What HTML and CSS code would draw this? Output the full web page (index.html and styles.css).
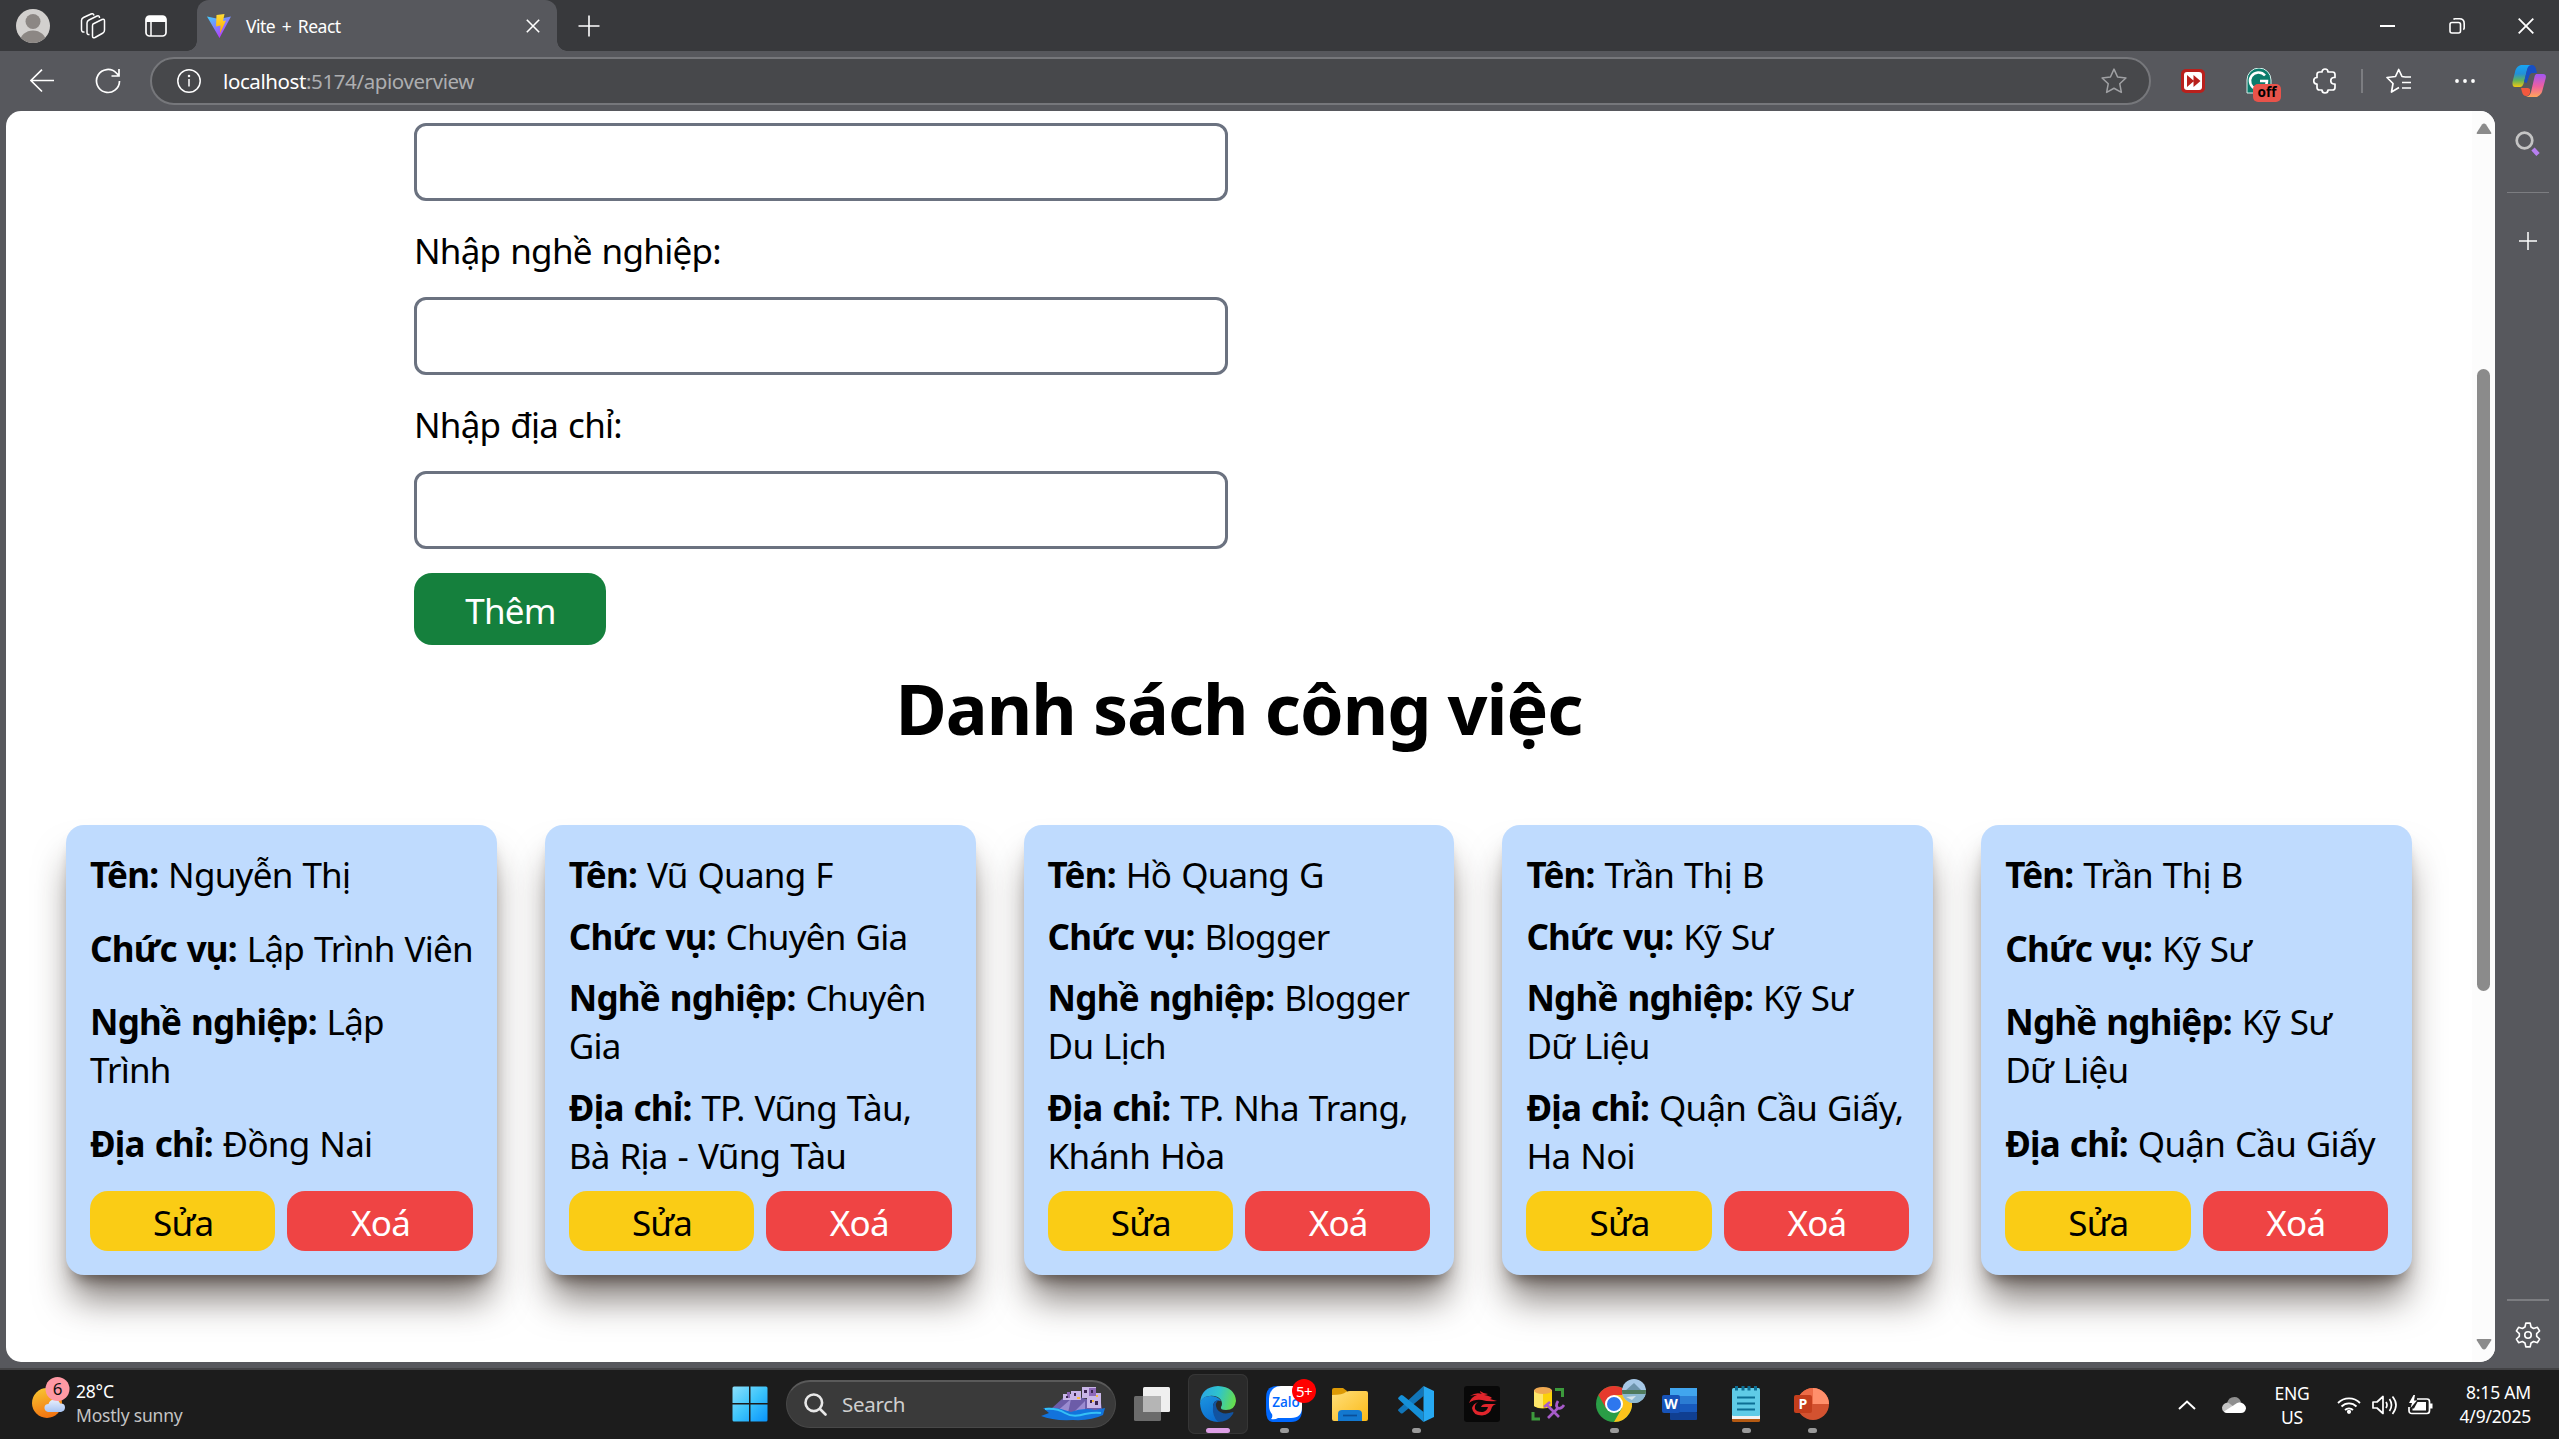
FILE: index.html
```html
<!DOCTYPE html>
<html lang="vi">
<head>
<meta charset="utf-8">
<title>Vite + React</title>
<link rel="stylesheet" href="styles.css">
</head>
<body>
<div class="screen">
  <header class="tabbar">
    <div class="tabbar-tools">
      <svg class="avatar" width="34" height="34" viewBox="0 0 34 34"><defs><clipPath id="av"><circle cx="17" cy="17" r="17"/></clipPath></defs><g clip-path="url(#av)"><rect width="34" height="34" fill="#d2d0ce"/><circle cx="17" cy="12.5" r="7.5" fill="#8c8784"/><ellipse cx="17" cy="33" rx="13" ry="11.5" fill="#8c8784"/></g></svg>
      <svg width="26" height="26" viewBox="0 0 26 26" fill="none" stroke="#fff" stroke-width="1.5" stroke-linejoin="round"><path d="M13 11 22 6.500Q24.500 5.500 24.500 8V17Q24.500 19 23 20L15 24.500Q12.500 25.500 12.500 23V13Q12.500 11.500 13 11Z"/><path d="M9.500 21.500Q7 22 7 19.500V10Q7 8 9 7L17 3Q19.500 2 19.500 5M4.500 19Q1.500 19.500 1.500 16.500V7.500Q1.500 5.500 3.500 4.500L11 1Q13.500 0 14 2.500"/></svg>
      <svg width="22" height="22" viewBox="0 0 22 22"><rect x="1" y="1" width="20" height="20" rx="3.500" fill="none" stroke="#fff" stroke-width="1.700"/><path d="M1 7V4Q1 1 4 1H18Q21 1 21 4V7Z" fill="#fff"/><path d="M6 7V21" stroke="#fff" stroke-width="1.500"/></svg>
    </div>
    <div class="tab">
      <svg width="24" height="24" viewBox="0 0 24 24"><defs><linearGradient id="vi" x1="0" y1="0" x2=".6" y2="1"><stop offset="0" stop-color="#41d1ff"/><stop offset="1" stop-color="#bd34fe"/></linearGradient><linearGradient id="vl" x1="0" y1="0" x2="0" y2="1"><stop offset="0" stop-color="#ffdd35"/><stop offset="1" stop-color="#ffa800"/></linearGradient></defs><path d="M0 2.500 12 5 24 2.500 12.500 24Z" fill="url(#vi)"/><path d="M9.500 1 17.500 0 16 7 19 6.500 13 19.500 13.500 11.500 9 12.500Z" fill="url(#vl)"/></svg>
      <span class="tab-title">Vite + React</span>
      <svg width="14" height="14" viewBox="0 0 14 14" stroke="#fff" stroke-width="1.600"><path d="M.8.800 13.200 13.200M13.200.800.800 13.200"/></svg>
    </div>
    <svg class="new-tab" width="22" height="22" viewBox="0 0 22 22" stroke="#fff" stroke-width="1.600"><path d="M11 .5V21.500M.5 11H21.500"/></svg>
    <div class="window-buttons">
      <span><svg width="16" height="16" viewBox="0 0 16 16"><path d="M0 7H15V9H0Z" fill="#fff"/></svg></span>
      <span><svg width="16" height="16" viewBox="0 0 16 16" fill="none" stroke="#fff" stroke-width="1.600"><rect x="1" y="4.500" width="10.500" height="10.500" rx="2"/><path d="M4.500 1.500Q5 .8 6 .8H10.500Q15.200.800 15.200 5.500V10Q15.200 11 14.300 11.600"/></svg></span>
      <span><svg width="16" height="16" viewBox="0 0 16 16" stroke="#fff" stroke-width="1.800"><path d="M.7.700 15.300 15.300M15.300.700.700 15.300"/></svg></span>
    </div>
  </header>

  <div class="toolbar">
    <svg class="back" width="24" height="24" viewBox="0 0 24 24" fill="none" stroke="#fff" stroke-width="1.700"><path d="M24 11.500H1M12 .7.900 11.500 12 22.500"/></svg>
    <svg class="reload" width="26" height="26" viewBox="0 0 26 26" fill="none" stroke="#fff" stroke-width="1.700"><path d="M24.500 13A11.500 11.500 0 1 1 21.300 5L24 7.700M24 1V8H16.500"/></svg>
    <div class="address">
      <svg width="24" height="24" viewBox="0 0 24 24" fill="none" stroke="#fff" stroke-width="1.500"><circle cx="12" cy="12" r="11.200"/><path d="M12 10V17.500"/><circle cx="12" cy="7" r=".5"/></svg>
      <span class="url"><b>localhost</b>:5174/apioverview</span>
      <svg width="26" height="26" viewBox="0 0 24 24" fill="none" stroke="#a0a1a4" stroke-width="1.400" stroke-linejoin="round"><path d="M12 1 15.300 8.300 23 9.200 17.300 14.500 18.800 22.500 12 18.700 5.200 22.500 6.700 14.500 1 9.200 8.700 8.300Z"/></svg>
    </div>
    <div class="extensions">
      <span class="slot"><svg width="24" height="26" viewBox="0 0 24 26"><rect y="1" width="24" height="24" rx="5" fill="#b9201c"/><rect x="3" y="4" width="18" height="18" rx="3" fill="#fff"/><path d="M6 7 13 13 6 19ZM12.500 7 19.500 13 12.500 19Z" fill="#b9201c"/></svg></span>
      <span class="slot grammar"><svg width="26" height="26" viewBox="0 0 26 26"><path d="M1 25V12A12 12 0 0 1 25 12V25Z" fill="#0a7c6c" stroke="#d6eeea" stroke-width="1"/><path d="M19 7.500A8.500 8.500 0 1 0 21 13H14" fill="none" stroke="#fff" stroke-width="2.500"/></svg><i class="off">off</i></span>
      <span class="slot"><svg width="24" height="26" viewBox="0 0 24 26" fill="none" stroke="#fff" stroke-width="1.700" stroke-linejoin="round"><path d="M9 4A3 3 0 0 1 15 4H19.500Q22 4 22 6.500V9.500H20.500A3.300 3.300 0 0 0 20.500 16H22V19.500Q22 22 19.500 22H15A3 3 0 0 1 9 22H6.500Q4 22 4 19.500V16A3.200 3.200 0 0 1 4 9.500V6.500Q4 4 6.500 4Z"/></svg></span>
      <i class="separator"></i>
      <span class="slot"><svg width="26" height="26" viewBox="0 0 26 26" fill="none" stroke="#fff" stroke-width="1.700" stroke-linejoin="round"><path d="M13 19.500 5.500 24 7 15.500 1 9.500 9.500 8.500 12.700 1.500 16 8.500 19 9M16 14.500H25M19 9H25M16 20H25"/></svg></span>
      <span class="slot"><svg width="20" height="4" viewBox="0 0 20 4" fill="#fff"><circle cx="2" cy="2" r="1.900"/><circle cx="10" cy="2" r="1.900"/><circle cx="18" cy="2" r="1.900"/></svg></span>
      <span class="slot last"><svg width="34" height="32" viewBox="0 0 34 32"><defs><linearGradient id="c1" x1="0" y1="0" x2="0" y2="1"><stop offset="0" stop-color="#16a5f3"/><stop offset=".4" stop-color="#2390d8"/><stop offset=".7" stop-color="#62b35a"/><stop offset="1" stop-color="#f2c811"/></linearGradient><linearGradient id="c2" x1="0" y1="0" x2="0" y2="1"><stop offset="0" stop-color="#a355f5"/><stop offset=".55" stop-color="#f0609d"/><stop offset="1" stop-color="#ffa55a"/></linearGradient></defs><path d="M8 22H3Q0 22 .5 17L3.500 5Q5 1 9 0H20Q16 1 15 5L12 17Q11 22 8 22Z" fill="url(#c1)"/><path d="M16 2Q17 0 20 0 23 0 24 4L25 8H21Q18 8 17 12L15 18 12 17 15 5Z" fill="#174fc4"/><path d="M17 12Q18 8 21 8H24L22 14 19 23H13Z" fill="#57585d"/><path d="M9 23H16L18 24 18 28Q17 31 15 31H14Q11 31 10 27Z" fill="#f2583e"/><path d="M24 9H31Q35 9 33.500 14L30 27Q28 31 25 32H14Q18 31 19 27L22 14Q22.500 10 24 9Z" fill="url(#c2)"/></svg></span>
    </div>
  </div>

  <div class="workspace">
    <main class="page">
      <div class="content">
        <form class="job-form">
          <input type="text">
          <label>Nhập nghề nghiệp:</label>
          <input type="text">
          <label>Nhập địa chỉ:</label>
          <input type="text">
          <button class="add" type="button">Thêm</button>
        </form>
        <h1>Danh sách công việc</h1>
        <section class="cards">
          <article class="card">
            <p><b>Tên:</b> Nguyễn Thị</p><p><b>Chức vụ:</b> Lập Trình Viên</p><p><b>Nghề nghiệp:</b> Lập<br>Trình</p><p><b>Địa chỉ:</b> Đồng Nai</p>
            <div class="actions"><button type="button" class="edit">Sửa</button><button type="button" class="delete">Xoá</button></div>
          </article>
          <article class="card">
            <p><b>Tên:</b> Vũ Quang F</p><p><b>Chức vụ:</b> Chuyên Gia</p><p><b>Nghề nghiệp:</b> Chuyên<br>Gia</p><p><b>Địa chỉ:</b> TP. Vũng Tàu,<br>Bà Rịa - Vũng Tàu</p>
            <div class="actions"><button type="button" class="edit">Sửa</button><button type="button" class="delete">Xoá</button></div>
          </article>
          <article class="card">
            <p><b>Tên:</b> Hồ Quang G</p><p><b>Chức vụ:</b> Blogger</p><p><b>Nghề nghiệp:</b> Blogger<br>Du Lịch</p><p><b>Địa chỉ:</b> TP. Nha Trang,<br>Khánh Hòa</p>
            <div class="actions"><button type="button" class="edit">Sửa</button><button type="button" class="delete">Xoá</button></div>
          </article>
          <article class="card">
            <p><b>Tên:</b> Trần Thị B</p><p><b>Chức vụ:</b> Kỹ Sư</p><p><b>Nghề nghiệp:</b> Kỹ Sư<br>Dữ Liệu</p><p><b>Địa chỉ:</b> Quận Cầu Giấy,<br>Ha Noi</p>
            <div class="actions"><button type="button" class="edit">Sửa</button><button type="button" class="delete">Xoá</button></div>
          </article>
          <article class="card">
            <p><b>Tên:</b> Trần Thị B</p><p><b>Chức vụ:</b> Kỹ Sư</p><p><b>Nghề nghiệp:</b> Kỹ Sư<br>Dữ Liệu</p><p><b>Địa chỉ:</b> Quận Cầu Giấy</p>
            <div class="actions"><button type="button" class="edit">Sửa</button><button type="button" class="delete">Xoá</button></div>
          </article>
        </section>
      </div>
      <div class="scrollbar">
        <svg width="16" height="12" viewBox="0 0 16 12"><path d="M1.500 11Q0 11 1 9.200L6 1.500Q8-.5 10 1.500L15 9.200Q16 11 14.500 11Z" fill="#8b8b8b"/></svg>
        <i class="thumb"></i>
        <svg class="down" width="16" height="12" viewBox="0 0 16 12"><path d="M1.500 1Q0 1 1 2.800L6 10.500Q8 12.500 10 10.500L15 2.800Q16 1 14.500 1Z" fill="#8b8b8b"/></svg>
      </div>
    </main>
    <aside class="sidebar">
      <svg width="26" height="26" viewBox="0 0 26 26" fill="none"><circle cx="9.500" cy="9.500" r="7.800" stroke="#c4c4c4" stroke-width="2.700"/><path d="M18 18 23 23.500" stroke="#b77ff0" stroke-width="4.500"/></svg>
      <hr>
      <svg width="18" height="18" viewBox="0 0 18 18" stroke="#fff" stroke-width="1.500"><path d="M9 0V18M0 9H18"/></svg>
      <hr class="bottom-rule">
      <svg width="26" height="26" viewBox="0 0 24 24" fill="none" stroke="#fff" stroke-width="1.500" stroke-linejoin="round"><path d="M10 1H14L14.800 4.600 17.200 6 20.700 4.900 22.700 8.300 20 10.800V13.200L22.700 15.700 20.700 19.100 17.200 18 14.800 19.400 14 23H10L9.200 19.400 6.800 18 3.300 19.100 1.300 15.700 4 13.200V10.800L1.300 8.300 3.300 4.900 6.800 6 9.200 4.600Z"/><circle cx="12" cy="12" r="3"/></svg>
    </aside>
  </div>

  <footer class="taskbar">
    <div class="weather">
      <svg width="38" height="41" viewBox="0 0 38 41"><defs><linearGradient id="sun" x1=".3" y1="0" x2=".6" y2="1"><stop offset="0" stop-color="#f8c430"/><stop offset="1" stop-color="#f2700f"/></linearGradient><linearGradient id="cl" x1="0" y1="0" x2="0" y2="1"><stop offset="0" stop-color="#e8effc"/><stop offset="1" stop-color="#a8c4f2"/></linearGradient></defs><circle cx="15" cy="26" r="15" fill="url(#sun)"/><path d="M16 35Q12 34 12.500 30Q13 27 16.500 27Q18 22 23 22.500Q27 23 28 26.500Q33 26 33 30.500Q33 34 29 35Z" fill="url(#cl)"/><circle cx="25.500" cy="12" r="12" fill="#ff99a4"/><text x="25.500" y="18" text-anchor="middle" font-size="17" font-family="Noto Sans, sans-serif" fill="#111">6</text></svg>
      <div class="two-line"><span class="bright">28°C</span><span class="dim">Mostly sunny</span></div>
    </div>
    <div class="apps">
      <span class="app"><svg width="36" height="36" viewBox="0 0 36 36"><defs><linearGradient id="w" x1="0" y1="0" x2="1" y2="1"><stop offset="0" stop-color="#8be0fc"/><stop offset=".5" stop-color="#3cc4fb"/><stop offset="1" stop-color="#0893fb"/></linearGradient></defs><path d="M.5 2Q.5.500 2 .5H17V17H.5ZM18.500.500H34Q35.500.500 35.500 2V17H18.500ZM.5 18.500H17V35.500H2Q.5 35.500.500 34ZM18.500 18.500H35.500V34Q35.500 35.500 34 35.500H18.500Z" fill="url(#w)"/></svg></span>
      <div class="search">
        <svg width="23" height="23" viewBox="0 0 23 23" fill="none" stroke="#e8e8e8" stroke-width="2.600" stroke-linecap="round"><circle cx="9.800" cy="9.800" r="8.300"/><path d="M16 16 21.500 21.500"/></svg>
        <span>Search</span>
        <svg class="castle" width="64" height="34" viewBox="0 0 64 34"><path d="M10 22 22 11 38 10 60 16 62 28 8 28Z" fill="#6c5ca8"/><path d="M14 26 30 12 27 26ZM32 26 44 14 44 27Z" fill="#9a8bd0"/><path d="M22 7H30V13H22ZM30 4H40V13H30ZM41 0H55V11H41ZM46 10H60V21H46ZM55 6H60V12H55Z" fill="#c9b6e8"/><path d="M26 5H29V11H26ZM48 1H55V9H48Z" fill="#8d68b8"/><path d="M33 6H35V9H33ZM43 3H46V6H43ZM50 3H52V6H50ZM49 13H51V16H49ZM54 14H57V18H54ZM25 9H27V11H25Z" fill="#3b2452"/><path d="M36 10H39V12H36ZM55 8H57V10H55ZM51 13H53V15H51Z" fill="#f5b942"/><path d="M0 29 8 26 2 21Q12 20 20 22L30 25Q42 20 54 23L64 21 62 28Q50 34 32 33 12 34 0 29Z" fill="#1273dc"/><path d="M4 22Q16 21 24 26T44 27Q54 25 60 26" stroke="#35c0f5" stroke-width="2" fill="none"/></svg>
      </div>
      <span class="app"><svg width="36" height="34" viewBox="0 0 36 34"><rect y="9" width="27" height="25" rx="1.500" fill="#6b6b6b"/><rect x="9" width="27" height="25" rx="1.500" fill="#efefef"/><path d="M9 9H27V25H10.500Q9 25 9 23.500Z" fill="#b5b5b5"/></svg></span>
      <span class="app active"><svg width="36" height="36" viewBox="0 0 36 36"><defs><linearGradient id="e1" x1="0" y1=".3" x2="1" y2=".5"><stop offset="0" stop-color="#2aa5e8"/><stop offset=".5" stop-color="#2fc4cc"/><stop offset="1" stop-color="#66dd4c"/></linearGradient><linearGradient id="e2" x1="0" y1="0" x2=".4" y2="1"><stop offset="0" stop-color="#1c95e0"/><stop offset="1" stop-color="#0c6fd0"/></linearGradient></defs><path d="M0 17Q1 1 18 0Q35 1 36 15Q35 24 26 24Q20 24 21 21Q23 18 21 14 17 9 9 10 2 11 0 17Z" fill="url(#e1)"/><path d="M0 17Q2 10 10 10 18 10 21 15 14 13 13 20 12 28 20 35L18 36Q1 35 0 17Z" fill="url(#e2)"/><path d="M13 20Q14 14 19 14 14 17 17 23 22 30 33 26 34 26 33 28 28 36 18 36 12 30 13 20Z" fill="#1253a0"/></svg><i class="mark wide"></i></span>
      <span class="app"><svg width="36" height="36" viewBox="0 0 36 36"><path d="M11 0H26Q36 0 36 11V24Q36 36 25 36H7Q0 36 0 24V12Q0 0 11 0Z" fill="#0068ff"/><path d="M15 0H26Q36 0 36 11V21Q36 32 25 32H12Q9 34 5 33 7 31 6 28 3 25 3 19V13Q4 0 15 0Z" fill="#fff"/><text x="20" y="21" text-anchor="middle" font-size="13.500" font-weight="600" font-family="Open Sans, sans-serif" fill="#0068ff">Zalo</text></svg><i class="count">5+</i><i class="mark"></i></span>
      <span class="app"><svg width="36" height="36" viewBox="0 0 36 36"><defs><linearGradient id="f" x1="0" y1="0" x2="1" y2="1"><stop offset="0" stop-color="#ffdf7a"/><stop offset="1" stop-color="#fbb917"/></linearGradient></defs><path d="M0 4Q0 2 2 2H11L15 5V10H0Z" fill="#dd9a05"/><path d="M0 9Q11 9 14 6 16 5 18 5H34Q36 5 36 7V33Q36 35 34 35H2Q0 35 0 33Z" fill="url(#f)"/><path d="M6 35V28Q6 24 10 24H26Q30 24 30 28V35Z" fill="#1378cf"/><path d="M11 29.500H25" stroke="#0b4f98" stroke-width="1.700"/></svg></span>
      <span class="app"><svg width="36" height="36" viewBox="0 0 36 36"><path d="M25.500 0V10L5 27Q3.500 28 2.500 27L.5 25Q-.5 24 .8 23Z" fill="#1175b8"/><path d="M25.500 36V26L5 9.500Q3.500 8.500 2.500 9.500L.5 11.500Q-.5 12.500.800 13.500Z" fill="#1590d8"/><path d="M25.500 0 36 5V31L25.500 36Z" fill="#27a9f2"/></svg><i class="mark"></i></span>
      <span class="app"><svg width="36" height="36" viewBox="0 0 36 36"><rect width="36" height="36" rx="3" fill="#080808"/><path d="M5 17Q7 11 13 9 9 9 6 10 12 6 18 8 16 7 16 5 20 8 24 8 22 9 20 9 26 10 28 12L26 13 33 15Q24 16 18 14 10 13 5 17Z" fill="#e0252c"/><path d="M14 16Q10 19 11 23 13 26.500 19 26 23 25 24 21H17Q18 18 22 18H32Q29 19 28 21 26 29 18 29.500 9 29.500 8 22 9 18 14 16Z" fill="#e0252c"/></svg></span>
      <span class="app"><svg width="36" height="36" viewBox="0 0 36 36"><path d="M4 4V20Q12 25 22 20V4Z" fill="#fbd20a"/><path d="M4 4V20Q7 22 13 22V5Z" fill="#fde66a"/><ellipse cx="13" cy="4.500" rx="9" ry="3.500" fill="#efa951"/><path d="M25 3.500H32.500V11M3 26V33H10" fill="none" stroke="#3c9a3c" stroke-width="3"/><path d="M14 21 20 16M17 19 29 31M28 15Q25 20 28 22 31 23.500 34 19M28 22 18 32" fill="none" stroke="#a75bc9" stroke-width="2.700"/></svg></span>
      <span class="app"><svg width="36" height="36" viewBox="0 0 36 36"><circle cx="18" cy="18" r="18" fill="#2a9d46"/><path d="M18 18 2.400 9A18 18 0 0 1 33.600 9Z" fill="#e6392d"/><path d="M18 9H33.600A18 18 0 0 1 18 36L26 22Z" fill="#fcc31b"/><path d="M2.400 9 10.200 22.500 18 9Z" fill="#e6392d"/><circle cx="18" cy="18" r="9" fill="#fff"/><circle cx="18" cy="18" r="7" fill="#2e77ee"/></svg>
        <svg class="photo" width="24" height="24" viewBox="0 0 24 24"><defs><clipPath id="ph"><circle cx="12" cy="12" r="12"/></clipPath></defs><g clip-path="url(#ph)"><rect width="24" height="24" fill="#a6c8e6"/><path d="M3 12 12 4 20 12Z" fill="#6d94ab"/><rect y="11" width="24" height="4" fill="#4e7a5c"/><rect y="15" width="24" height="9" fill="#8db9d2"/><path d="M4 18 14 17 10 21Z" fill="#d5e4ea"/></g></svg><i class="mark"></i></span>
      <span class="app"><svg width="36" height="36" viewBox="0 0 36 36"><rect x="8" y="2" width="27" height="9" fill="#41a5ee"/><rect x="8" y="10" width="27" height="8" fill="#2b7cd3"/><rect x="8" y="18" width="27" height="8" fill="#185abd"/><rect x="8" y="26" width="27" height="8" rx="1" fill="#103f91"/><rect y="9" width="18" height="18" rx="2" fill="#1753b8"/><text x="9" y="23" text-anchor="middle" font-size="14" font-weight="700" font-family="Open Sans, sans-serif" fill="#fff">W</text></svg></span>
      <span class="app"><svg width="36" height="36" viewBox="0 0 36 36"><rect x="4" y="28" width="28" height="8" rx="1.500" fill="#b55a12"/><path d="M4 28H32V33H4Z" fill="#f2f2f2"/><rect x="4" y="2" width="28" height="28" rx="1.500" fill="#5fcbe6"/><path d="M9 11.500H27M9 17.500H27M9 23.500H27" stroke="#0c6f94" stroke-width="2"/><path d="M8.500 0V4.500M15 0V4.500M21 0V4.500M27.500 0V4.500" stroke="#0c6f94" stroke-width="3"/></svg><i class="mark"></i></span>
      <span class="app"><svg width="36" height="36" viewBox="0 0 36 36"><circle cx="19" cy="18" r="16" fill="#d35230"/><path d="M19 2A16 16 0 0 1 35 18H19Z" fill="#ff8f6b"/><path d="M19 2A16 16 0 0 0 3 18H19Z" fill="#ed6c47"/><rect y="9" width="18" height="18" rx="2" fill="#c43e1c"/><text x="9" y="23" text-anchor="middle" font-size="14" font-weight="700" font-family="Open Sans, sans-serif" fill="#fff">P</text></svg><i class="mark"></i></span>
    </div>
    <div class="tray">
      <svg width="18" height="10" viewBox="0 0 18 10" fill="none" stroke="#fff" stroke-width="2"><path d="M1 9 9 1.500 17 9"/></svg>
      <svg class="cloud" width="24" height="16" viewBox="0 0 24 16"><path d="M5 7Q6 0 12.500 0 17 0 19 5L11 9Z" fill="#8f8f8f"/><path d="M5 16Q0 15 0 10.500 1 6 6 5.500L14 11 6 16Z" fill="#c4c4c4"/><path d="M5 16Q2 15.500 2 14.500L12 8Q17 4 20 6 24 8 24 11.500 23 16 19 16Z" fill="#fff"/></svg>
      <div class="two-line lang"><span>ENG</span><span>US</span></div>
      <svg class="wifi" width="24" height="18" viewBox="0 0 24 18" fill="none" stroke="#fff" stroke-width="1.800"><path d="M1 7A15.500 15.500 0 0 1 23 7M4.500 10.500A10.500 10.500 0 0 1 19.500 10.500M8 14A6 6 0 0 1 16 14"/><circle cx="12" cy="15.800" r="1.200" fill="#fff"/></svg>
      <svg width="26" height="20" viewBox="0 0 26 20" fill="none" stroke="#fff" stroke-width="1.700" stroke-linejoin="round"><path d="M1 7H5L11 1.500V18.500L5 13H1ZM14 7Q16 10 14 13M17.500 4Q21.500 10 17.500 16M20.500 1.500Q27.500 10 20.500 19"/></svg>
      <svg class="battery" width="25" height="20" viewBox="0 0 25 20"><path d="M9 4H19Q21.500 4 21.500 6.500V15.500Q21.500 18.500 19 18.500H4Q1 18.500 1 15.500V12" fill="none" stroke="#fff" stroke-width="1.700"/><path d="M9.500 7H18V15.500H4.500V13.500H6ZM22 8.500H24.500V13.500H22ZM5.500 0 1 8H4L2.500 13 9 5.500H6L7 0Z" fill="#fff"/></svg>
      <div class="two-line clock"><span>8:15 AM</span><span>4/9/2025</span></div>
    </div>
  </footer>
</div>
</body>
</html>
```
FILE: styles.css
```css
* { box-sizing: border-box; }
body { margin: 0; font-family: "Noto Sans", "Open Sans", sans-serif; color: #000; }
svg { display: block; flex: none; }
i { font-style: normal; }

.screen { width: 2559px; height: 1439px; display: flex; flex-direction: column; background: #57585d; overflow: hidden; }

/* Browser tabs */
.tabbar { height: 51px; flex: none; display: flex; align-items: center; background: #38393c; }
.tabbar-tools { width: 197px; display: flex; align-items: center; padding-left: 16px; }
.tabbar-tools svg:nth-child(2) { margin-left: 30px; }
.tabbar-tools svg:nth-child(3) { margin-left: 39px; }
.tab { width: 360px; height: 51px; display: flex; align-items: center; padding: 0 17px 0 10px; background: #57585d; border-radius: 12px 12px 0 0; position: relative; color: #fff; font-size: 17.500px; }
.tab::before, .tab::after { content: ""; position: absolute; bottom: 0; width: 10px; height: 10px; }
.tab::before { left: -10px; background: radial-gradient(circle at 0 0, #38393c 9.500px, #57585d 10px); }
.tab::after { right: -10px; background: radial-gradient(circle at 100% 0, #38393c 9.500px, #57585d 10px); }
.tab-title { flex: 1; margin-left: 15px; letter-spacing: -.5px; word-spacing: 2.500px; white-space: nowrap; }
.new-tab { margin-left: 21px; }
.window-buttons { margin: 0 -1px 0 auto; display: flex; }
.window-buttons span { width: 69px; display: flex; justify-content: center; }

/* Toolbar */
.toolbar { height: 60px; flex: none; display: flex; align-items: center; }
.back { margin-left: 30px; }
.reload { margin-left: 41px; }
.address { width: 2002px; height: 48px; margin-left: 29px; display: flex; align-items: center; padding: 0 22px 0 25px; border: 2px solid #76777b; border-radius: 24px; background: #47484b; }
.url { flex: 1; margin-left: 22px; font-size: 20.500px; letter-spacing: -.4px; color: #adaeb0; }
.url b { font-weight: 400; color: #fff; }
.extensions { flex: 1; display: flex; align-items: center; padding-left: 9px; }
.slot { width: 66px; flex: none; display: flex; justify-content: center; }
.slot.last { width: 61px; }
.grammar { position: relative; }
.off { position: absolute; left: 27px; top: 16px; width: 28px; height: 18px; border-radius: 5px; background: #e8534a; color: #000; font-size: 13.500px; font-weight: 700; line-height: 17px; text-align: center; }
.separator { width: 2px; height: 24px; margin: 0 3px; background: #7c7d81; }

/* Web page */
.workspace { flex: 1; min-height: 0; display: flex; padding-left: 6px; }
.page { width: 2489px; height: 1251px; display: flex; background: #fff; border-radius: 15px; overflow: hidden; }
.content { flex: 1; padding: 12px 60px 0; font-size: 35px; line-height: 48px; letter-spacing: -.75px; word-spacing: 1.500px; }
.job-form { width: 814px; margin-left: 348px; display: flex; flex-direction: column; align-items: flex-start; gap: 24px; }
.job-form input { width: 100%; height: 78px; border: 3px solid #6b7280; border-radius: 12px; background: #fff; }
.job-form label { height: 48px; padding-top: 2px; }
button { border: 0; font: inherit; letter-spacing: inherit; border-radius: 18px; padding: 3px 0 0 1px; }
.add { width: 192px; height: 72px; padding-top: 4px; background: #15803d; color: #fff; }
h1 { margin: 24px 0 84px; padding-top: 3px; font-size: 70px; line-height: 72px; height: 72px; text-align: center; letter-spacing: -1px; word-spacing: 0; }
.cards { display: grid; grid-template-columns: repeat(5, minmax(0, 1fr)); gap: 48px; }
.card { height: 450px; padding: 24px; display: flex; flex-direction: column; justify-content: space-between; background: #bfdbfe; border-radius: 18px; box-shadow: 0 30px 37.500px -7.500px rgba(41, 30, 24, .6), 0 12px 15px -9px rgba(41, 30, 24, .6); }
.card p { margin: 2px 0 -2px; white-space: nowrap; }
.actions { display: grid; grid-template-columns: 1fr 1fr; gap: 12px; }
.actions button { height: 60px; }
.edit { background: #facc15; color: #000; }
.delete { background: #ef4444; color: #fff; }
.scrollbar { width: 23px; display: flex; flex-direction: column; align-items: flex-start; padding: 12px 0 12px 4px; background: #fcfcfc; }
.thumb { width: 13px; height: 622px; margin: 234px 0 0 1px; border-radius: 7px; background: #8b8b8b; }
.down { margin-top: auto; }
.sidebar { flex: 1; height: 1251px; display: flex; flex-direction: column; align-items: center; padding: 20px 0 14px 1px; }
.sidebar hr { width: 42px; height: 1px; margin: 35px 0 39px; border: 0; background: #7c7d81; }
.sidebar .bottom-rule { height: 2px; margin: auto 0 21px; }

/* Taskbar */
.taskbar { height: 71px; flex: none; display: flex; border-top: 2px solid #434345; background: #1c1c1c; color: #fff; font-size: 17.500px; }
.weather { width: 720px; display: flex; padding: 7px 0 0 32px; gap: 6px; }
.two-line { display: flex; flex-direction: column; line-height: 24px; letter-spacing: -.2px; white-space: nowrap; }
.weather .two-line { margin-top: 2px; }
.dim { color: #c4c4c4; }
.apps { display: flex; gap: 6px; padding-top: 4px; }
.app { position: relative; width: 60px; height: 60px; display: flex; justify-content: center; align-items: center; border-radius: 7px; }
.active { background: #2a2a2a; box-shadow: inset 0 0 0 1px #363636; }
.mark { position: absolute; bottom: 1px; left: 26px; width: 9px; height: 5px; border-radius: 3px; background: #9a9a9a; }
.mark.wide { left: 18px; width: 24px; background: #dd9fe6; }
.count { position: absolute; left: 38px; top: 5px; width: 24px; height: 24px; border-radius: 50%; background: #f00; font-size: 15px; line-height: 24px; text-align: center; letter-spacing: -.5px; }
.photo { position: absolute; left: 38px; top: 5px; }
.search { width: 330px; height: 48px; margin-top: 6px; padding: 0 10px 0 17px; display: flex; align-items: center; border-radius: 24px; background: #3a3a3a; border: 1px solid #484848; border-top: 2px solid #5a5a5a; font-size: 20.500px; color: #cfcfcf; }
.search svg, .search span { margin-top: -1px; }
.search span { margin-left: 15px; flex: 1; letter-spacing: -.3px; }
.tray { margin-left: auto; padding-right: 28px; display: flex; align-items: center; }
.cloud { margin-left: 26px; }
.lang { margin-left: 27px; width: 38px; align-items: center; }
.wifi { margin: 0 11px 0 26px; }
.battery { margin-left: 10px; }
.clock { width: 98px; align-items: flex-end; margin-top: -2px; }
```
